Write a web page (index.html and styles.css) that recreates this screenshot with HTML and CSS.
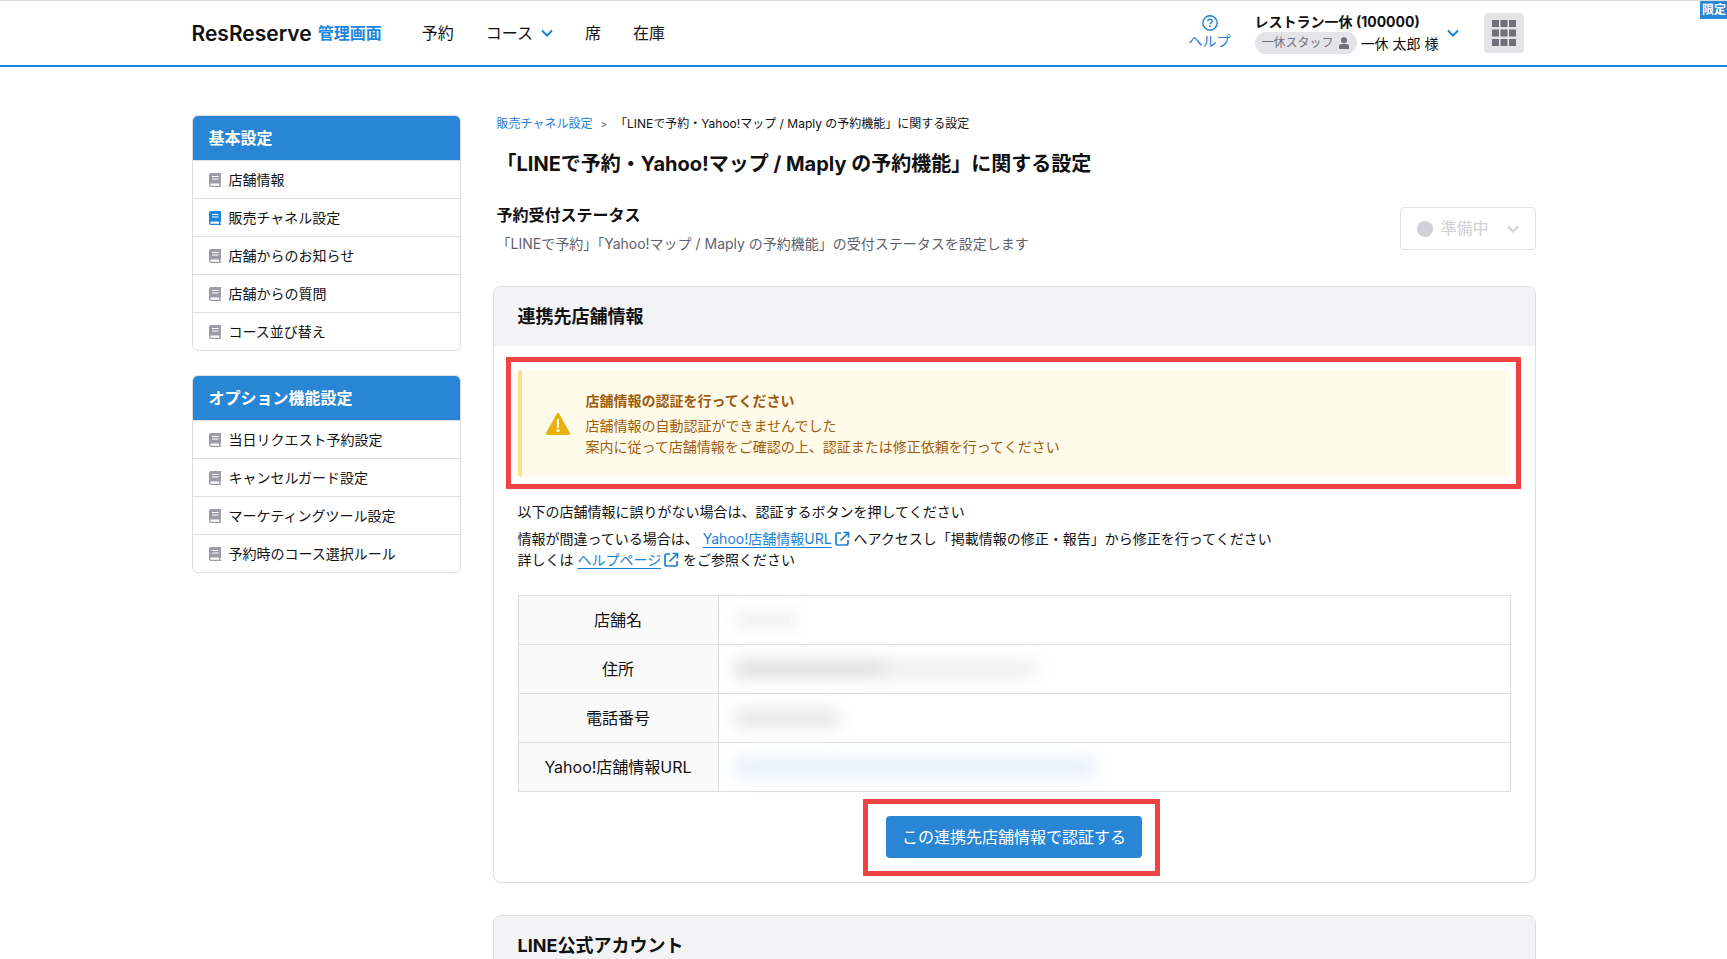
FILE: index.html
```html
<!DOCTYPE html>
<html lang="ja">
<head>
    <meta charset="UTF-8">
    <meta name="viewport" content="width=device-width, initial-scale=1.0">
    <title>ResReserve 管理画面</title>
    <link rel="stylesheet" href="styles.css">
</head>
<body>
    <!-- Shared icons -->
    <svg class="icon-defs" aria-hidden="true">
        <symbol id="icon-book" viewBox="0 0 12 14">
            <path fill="currentColor" fill-rule="evenodd" d="M2 0h10v10.400h-.6v2.400h.6V14H2a2 2 0 0 1-2-2V2a2 2 0 0 1 2-2zM3 3v1h6.500V3zM3 5.500v1h6.500v-1zM2.300 10.600a1.100 1.100 0 0 0 0 2.200H10v-2.200z"/>
        </symbol>
        <symbol id="icon-chevron" viewBox="0 0 12 8">
            <path d="M1 1.500l5 5 5-5" fill="none" stroke="currentColor" stroke-width="2"/>
        </symbol>
        <symbol id="icon-external" viewBox="0 0 16 16">
            <path d="M7 2H3.500A1.500 1.500 0 0 0 2 3.500v9A1.500 1.500 0 0 0 3.500 14h9a1.500 1.500 0 0 0 1.500-1.500V9M9.500 1.500h5v5M14 2L6.500 9.500" fill="none" stroke="currentColor" stroke-width="1.700"/>
        </symbol>
    </svg>

    <header class="header">
        <div class="header-inner">
            <a class="logo" href="#">ResReserve <span>管理画面</span></a>
            <nav class="nav">
                <a href="#">予約</a>
                <button type="button">コース <svg class="chevron"><use href="#icon-chevron"/></svg></button>
                <a href="#">席</a>
                <a href="#">在庫</a>
            </nav>
            <a class="help" href="#">
                <svg width="16" height="16" viewBox="0 0 16 16" fill="none" stroke="currentColor" stroke-width="1.400">
                    <circle cx="8" cy="8" r="7.200"/>
                    <path d="M5.800 6.300c0-1.200 1-2.100 2.200-2.100s2.200.8 2.200 2c0 1.500-2.200 1.600-2.200 3.100M8 10.600v1.500"/>
                </svg>
                ヘルプ
            </a>
            <button class="account" type="button">
                <span class="account-text">
                    <strong>レストラン一休 (100000)</strong>
                    <span class="account-user">
                        <span class="staff">一休スタッフ
                            <svg width="12" height="12" viewBox="0 0 12 12" fill="currentColor">
                                <circle cx="6" cy="3.200" r="3"/>
                                <path d="M1 12v-2.500a2.500 2.500 0 0 1 2.500-2.500h5A2.500 2.500 0 0 1 11 9.500V12z"/>
                            </svg>
                        </span>
                        一休 太郎 様
                    </span>
                </span>
                <svg class="chevron"><use href="#icon-chevron"/></svg>
            </button>
            <button class="apps" type="button" aria-label="メニュー">
                <svg width="24" height="26" viewBox="0 0 24 26" fill="currentColor">
                    <path d="M0 0h7v7H0zM8.500 0h7v7h-7zM17 0h7v7h-7zM0 9.500h7v7H0zM8.500 9.500h7v7h-7zM17 9.500h7v7h-7zM0 19h7v7H0zM8.500 19h7v7h-7zM17 19h7v7h-7z"/>
                </svg>
            </button>
        </div>
        <span class="limited">限定</span>
    </header>

    <div class="container">
        <aside class="sidebar">
            <nav class="menu">
                <h2>基本設定</h2>
                <a href="#"><svg><use href="#icon-book"/></svg>店舗情報</a>
                <a class="active" href="#"><svg><use href="#icon-book"/></svg>販売チャネル設定</a>
                <a href="#"><svg><use href="#icon-book"/></svg>店舗からのお知らせ</a>
                <a href="#"><svg><use href="#icon-book"/></svg>店舗からの質問</a>
                <a href="#"><svg><use href="#icon-book"/></svg>コース並び替え</a>
            </nav>
            <nav class="menu">
                <h2>オプション機能設定</h2>
                <a href="#"><svg><use href="#icon-book"/></svg>当日リクエスト予約設定</a>
                <a href="#"><svg><use href="#icon-book"/></svg>キャンセルガード設定</a>
                <a href="#"><svg><use href="#icon-book"/></svg>マーケティングツール設定</a>
                <a href="#"><svg><use href="#icon-book"/></svg>予約時のコース選択ルール</a>
            </nav>
        </aside>

        <main class="main">
            <div class="breadcrumb">
                <a href="#">販売チャネル設定</a>
                <span class="separator">&gt;</span>
                <span>「LINEで予約・Yahoo!マップ / Maply の予約機能」に関する設定</span>
            </div>
            <h1>「LINEで予約・Yahoo!マップ / Maply の予約機能」に関する設定</h1>

            <div class="status">
                <div>
                    <h2><label for="status">予約受付ステータス</label></h2>
                    <p>「LINEで予約」「Yahoo!マップ / Maply の予約機能」の受付ステータスを設定します</p>
                </div>
                <div class="status-select">
                    <span class="dot"></span>
                    <select id="status" disabled>
                        <option>準備中</option>
                    </select>
                    <svg class="chevron"><use href="#icon-chevron"/></svg>
                </div>
            </div>

            <section class="card">
                <h2 class="card-title">連携先店舗情報</h2>
                <div class="card-body">
                    <div class="alert highlight">
                        <svg width="24" height="22" viewBox="0 0 24 22">
                            <path d="M10.600.9a1.600 1.600 0 0 1 2.800 0l10.300 18.500A1.700 1.700 0 0 1 22.200 22H1.800A1.700 1.700 0 0 1 .3 19.400z" fill="#e9b10c"/>
                            <path d="M12 7v7" stroke="#fff" stroke-width="2" stroke-linecap="round"/>
                            <circle cx="12" cy="17.500" r="1.500" fill="#fff"/>
                        </svg>
                        <div>
                            <strong>店舗情報の認証を行ってください</strong>
                            <p>店舗情報の自動認証ができませんでした<br>案内に従って店舗情報をご確認の上、認証または修正依頼を行ってください</p>
                        </div>
                    </div>

                    <div class="guide">
                        <p>以下の店舗情報に誤りがない場合は、認証するボタンを押してください</p>
                        <p>
                            情報が間違っている場合は、
                            <a href="#">Yahoo!店舗情報URL</a><svg><use href="#icon-external"/></svg>
                            へアクセスし「掲載情報の修正・報告」から修正を行ってください<br>
                            詳しくは
                            <a href="#">ヘルプページ</a><svg><use href="#icon-external"/></svg>
                            をご参照ください
                        </p>
                    </div>

                    <table class="shop">
                        <tr>
                            <th scope="row">店舗名</th>
                            <td><span class="masked masked-name"></span></td>
                        </tr>
                        <tr>
                            <th scope="row">住所</th>
                            <td><span class="masked masked-address"></span></td>
                        </tr>
                        <tr>
                            <th scope="row">電話番号</th>
                            <td><span class="masked masked-tel"></span></td>
                        </tr>
                        <tr>
                            <th scope="row">Yahoo!店舗情報URL</th>
                            <td><span class="masked masked-url"></span></td>
                        </tr>
                    </table>

                    <div class="action">
                        <div class="highlight highlight-button">
                            <button class="primary" type="button">この連携先店舗情報で認証する</button>
                        </div>
                    </div>
                </div>
            </section>

            <section class="card">
                <h2 class="card-title">LINE公式アカウント</h2>
            </section>
        </main>
    </div>
</body>
</html>
```
FILE: styles.css
```css
* {
    margin: 0;
    padding: 0;
    box-sizing: border-box;
}

body {
    background-color: #fff;
    color: #111;
    font-family: Inter, "Noto Sans CJK JP", sans-serif;
    font-size: 14px;
    line-height: 21px;
}

a {
    color: inherit;
    text-decoration: none;
}

button {
    background: none;
    border: none;
    color: inherit;
    font: inherit;
    cursor: pointer;
}

svg {
    flex-shrink: 0;
}

.icon-defs {
    display: none;
}

.chevron {
    width: 12px;
    height: 8px;
    color: #1b80d3;
}

/* Header */
.header {
    position: relative;
    border-top: 1px solid #dcdcdc;
    border-bottom: 2px solid #1f84d4;
}

.header-inner {
    display: flex;
    align-items: center;
    max-width: 1344px;
    height: 64px;
    margin: 0 auto;
    padding-right: 12px;
}

.logo {
    display: flex;
    align-items: center;
    gap: 6px;
    font-size: 21px;
    font-weight: 600;
}

.logo span {
    color: #1b87e0;
    font-size: 16px;
    font-weight: bold;
}

.nav {
    display: flex;
    align-items: center;
    gap: 32px;
    margin-left: 40px;
    margin-right: auto;
    font-size: 16px;
}

.nav button {
    display: flex;
    align-items: center;
    gap: 8px;
}

.help {
    display: flex;
    flex-direction: column;
    align-items: center;
    margin-right: 24px;
    color: #1b80d3;
    line-height: 20px;
}

.account {
    display: flex;
    align-items: center;
    gap: 8px;
    margin-right: 25px;
    text-align: left;
}

.account-text strong {
    display: block;
    line-height: 20px;
}

.account-user {
    display: flex;
    align-items: center;
    gap: 4px;
}

.staff {
    display: flex;
    align-items: center;
    gap: 4px;
    padding: 0 7px;
    border-radius: 11px;
    background-color: #e3e3e8;
    color: #70707c;
    font-size: 12px;
    line-height: 22px;
}

.apps {
    display: flex;
    align-items: center;
    justify-content: center;
    width: 40px;
    height: 40px;
    border-radius: 4px;
    background-color: #e3e3e8;
    color: #70707c;
}

.limited {
    position: absolute;
    top: 0;
    right: 0;
    padding: 0 1px 0 2px;
    background-color: #2986d4;
    color: #fff;
    font-size: 12px;
    font-weight: bold;
    line-height: 18px;
}

/* Layout */
.container {
    display: flex;
    gap: 32px;
    max-width: 1344px;
    margin: 0 auto;
    padding: 48px 0;
}

.sidebar {
    flex: 0 0 269px;
}

.main {
    flex: 1;
    min-width: 0;
}

/* Sidebar */
.menu {
    margin-bottom: 24px;
    border: 1px solid #dddde1;
    border-radius: 6px;
    overflow: hidden;
}

.menu h2 {
    padding: 0 16px;
    background-color: #2986d4;
    color: #fff;
    font-size: 16px;
    line-height: 44px;
}

.menu a {
    display: flex;
    align-items: center;
    gap: 8px;
    height: 38px;
    padding: 0 16px;
    border-top: 1px solid #dddde1;
}

.menu svg {
    width: 12px;
    height: 14px;
    color: #9c9ca8;
}

.menu .active svg {
    color: #1b84dc;
}

/* Page heading */
.breadcrumb {
    display: flex;
    gap: 8px;
    padding-left: 4px;
    font-size: 12px;
    line-height: 18px;
}

.breadcrumb a {
    color: #1b80d3;
}

.separator {
    color: #555;
    font-size: 10px;
}

h1 {
    margin-top: 15px;
    padding-left: 4px;
    font-size: 20px;
    line-height: 32px;
}

.status {
    display: flex;
    align-items: center;
    justify-content: space-between;
    margin: 23px 0 32px;
    padding-left: 4px;
}

.status h2 {
    margin-bottom: 6px;
    font-size: 16px;
    line-height: 24px;
}

.status p {
    color: #5f5f6b;
}

.status-select {
    display: flex;
    align-items: center;
    gap: 8px;
    width: 136px;
    height: 43px;
    padding: 0 16px;
    border: 1px solid #e2e2e6;
    border-radius: 4px;
}

.status-select select {
    flex: 1;
    min-width: 0;
    appearance: none;
    border: none;
    background: none;
    color: #cfcfd6;
    font: inherit;
    font-size: 16px;
    opacity: 1;
}

.status-select .chevron {
    color: #cfcfd6;
}

.dot {
    width: 16px;
    height: 16px;
    border-radius: 50%;
    background-color: #d0d0d7;
}

/* Cards */
.card {
    margin-bottom: 32px;
    border: 1px solid #dddde1;
    border-radius: 8px;
    overflow: hidden;
}

.card-title {
    padding: 16px 24px;
    background-color: #f3f3f5;
    font-size: 18px;
    line-height: 27px;
}

.card-body {
    padding: 24px;
}

.alert {
    display: flex;
    align-items: center;
    gap: 16px;
    padding: 20px 24px;
    border-left: 4px solid #fee082;
    border-radius: 4px;
    background-color: #fffbea;
    color: #9f5b0e;
}

.alert strong {
    display: block;
    margin-bottom: 4px;
}

/* Red frame around the parts to check */
.highlight {
    position: relative;
}

.highlight::after {
    content: "";
    position: absolute;
    inset: -13px -10px -12px -16px;
    border: 5px solid #f04444;
    pointer-events: none;
}

.highlight-button::after {
    inset: -17px -18px -18px -23px;
}

.guide {
    margin: 24px 0 25px;
}

.guide p + p {
    margin-top: 6px;
}

.guide a {
    color: #1b80d3;
    text-decoration: underline;
    text-underline-offset: 3px;
}

.guide svg {
    width: 16px;
    height: 16px;
    margin-left: 2px;
    color: #1b80d3;
    vertical-align: -3px;
}

.shop {
    width: 100%;
    border-collapse: collapse;
    font-size: 16px;
}

.shop th,
.shop td {
    height: 49px;
    border: 1px solid #dddde1;
}

.shop th {
    width: 200px;
    background-color: #fafafa;
    font-weight: normal;
}

.shop td {
    padding: 0 16px;
}

/* Hidden shop details */
.masked {
    display: block;
    width: 60px;
    height: 18px;
    background-color: #f1f1f1;
    filter: blur(8px);
}

.masked-address {
    width: 300px;
    background: linear-gradient(to right, #dedede 45%, #efefef 55%);
}

.masked-tel {
    width: 104px;
    background-color: #e6e6e6;
}

.masked-url {
    width: 360px;
    background-color: #e4effa;
}

.action {
    display: flex;
    justify-content: center;
    margin-top: 24px;
}

.primary {
    display: block;
    padding: 0 16px;
    border-radius: 4px;
    background-color: #2986d4;
    color: #fff;
    font-size: 16px;
    line-height: 42px;
}
```
